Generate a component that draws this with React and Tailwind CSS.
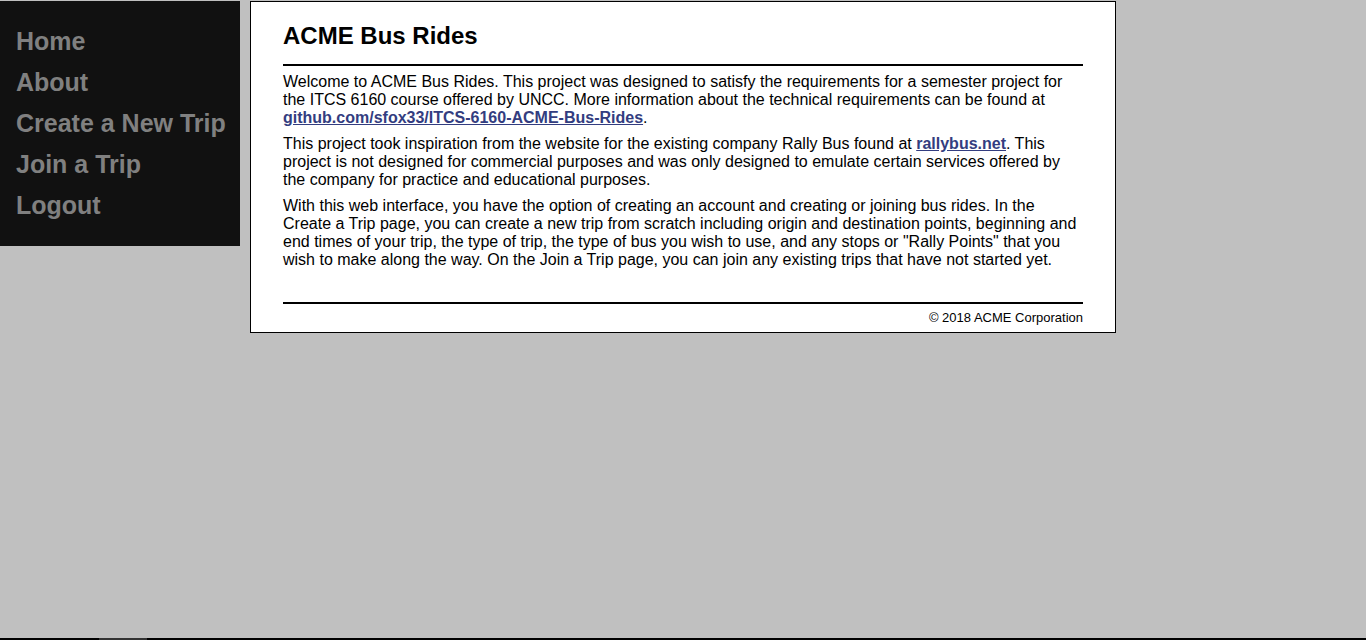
const navItems = ["Home", "About", "Create a New Trip", "Join a Trip", "Logout"];

function Sidebar() {
  return (
    <nav className="w-[240px] h-[245px] bg-[#111111] pt-[25px] px-4 shrink-0">
      <ul>
        {navItems.map((item) => (
          <li key={item} className="h-[41px] leading-[30px]">
            <a href="#" className="text-[25px] font-bold text-[#808080] whitespace-nowrap">
              {item}
            </a>
          </li>
        ))}
      </ul>
    </nav>
  );
}

function Link({ children }) {
  return (
    <a href="#" className="font-bold text-[#333d80] underline">
      {children}
    </a>
  );
}

export default function App() {
  return (
    <div
      className="min-h-[640px] flex flex-col bg-[#c0c0c0] text-black"
      style={{ fontFamily: '"Liberation Sans", Arial, sans-serif' }}
    >
      <div className="flex-1 flex items-start gap-[10px] pt-px">
        <Sidebar />
        <main className="w-[866px] border border-black bg-white px-8 pt-[20px] pb-[7px]">
          <h1 className="text-[24px] font-bold leading-[28px]">ACME Bus Rides</h1>
          <hr className="mt-[14px] border-0 h-[2px] bg-black" />
          <div className="mt-[7px] text-[16px] leading-[18px] space-y-2">
            <p>
              Welcome to ACME Bus Rides. This project was designed to satisfy the
              requirements for a semester project for the ITCS 6160 course offered
              by UNCC. More information about the technical requirements can be
              found at <Link>github.com/sfox33/ITCS-6160-ACME-Bus-Rides</Link>.
            </p>
            <p>
              This project took inspiration from the website for the existing
              company Rally Bus found at <Link>rallybus.net</Link>. This project is
              not designed for commercial purposes and was only designed to emulate
              certain services offered by the company for practice and educational
              purposes.
            </p>
            <p>
              With this web interface, you have the option of creating an account
              and creating or joining bus rides. In the Create a Trip page, you can
              create a new trip from scratch including origin and destination
              points, beginning and end times of your trip, the type of trip, the
              type of bus you wish to use, and any stops or "Rally Points" that you
              wish to make along the way. On the Join a Trip page, you can join any
              existing trips that have not started yet.
            </p>
          </div>
          <hr className="mt-[33px] border-0 h-[2px] bg-black" />
          <footer className="mt-[6px] text-right text-[13px] leading-[15px]">
            © 2018 ACME Corporation
          </footer>
        </main>
      </div>
      <div className="flex h-[2px] bg-black">
        <div className="ml-[99px] w-[48px] bg-[#333333]" />
      </div>
    </div>
  );
}
